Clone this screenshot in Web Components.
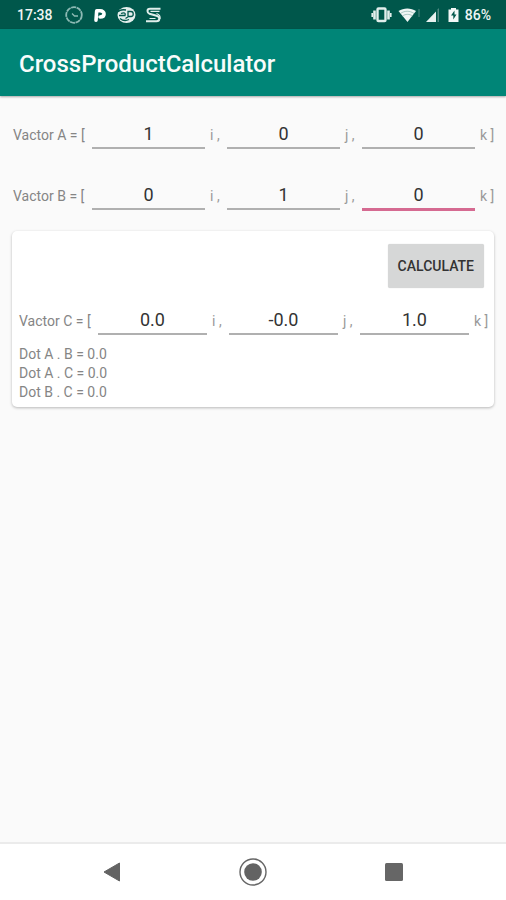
<!DOCTYPE html>
<html lang="en">
<head>
<meta charset="utf-8">
<meta name="viewport" content="width=device-width, initial-scale=1">
<title>CrossProductCalculator</title>
<style>
html, body { margin: 0; }
body { font-family: Roboto, "Noto Sans", sans-serif; background: #fafafa; color: #858585; }
</style>
</head>
<body>
<calculator-app></calculator-app>
<script>
function define(name, html, setup) {
  const template = document.createElement('template');
  template.innerHTML = html;
  customElements.define(name, class extends HTMLElement {
    constructor() {
      super();
      this.attachShadow({ mode: 'open' }).append(template.content.cloneNode(true));
    }
    connectedCallback() { if (setup) setup(this, this.shadowRoot); }
  });
}

define('status-bar', `
<style>
:host { display: flex; justify-content: space-between; align-items: center; height: 29px; padding: 0 15px 0 17px; background: #00574b; color: #eef5f4; font-size: 14px; font-weight: 500; line-height: 16px; }
div { display: flex; align-items: center; }
.left { gap: 8px; }
.right { gap: 4px; }
.time { margin-right: 3px; }
svg { display: block; flex: none; }
</style>
<div class="left">
  <span class="time">17:38</span>
  <svg width="20" height="20" viewBox="0 0 20 20" fill="none" stroke="#8dbab4"><circle cx="10" cy="10" r="7.800" stroke-width="1.800" stroke-dasharray="5 .6"/><path d="M8 8.500 10.500 11H14" stroke-width="1.300"/></svg>
  <svg width="16" height="20" viewBox="0 0 16 20"><path fill="none" stroke="#fff" stroke-width="3.600" stroke-linecap="round" stroke-linejoin="round" d="M4 15.200 4.700 5.800H8C13.500 5.800 13.300 12 8 12"/></svg>
  <svg width="20" height="20" viewBox="0 0 20 20"><ellipse cx="10.500" cy="10" rx="9" ry="8" fill="#e4efed"/><g fill="none" stroke="#00574b" stroke-width="1.300"><path d="M2 7C4 4 7 4.500 10 5M5 8.500C8 7 10 8 9 10.500H3M12 6.500h3c3 0 3 5 0 5h-3ZM9.500 13.500l3-2M4 13.500c3 2.500 6 2.500 9 1"/></g></svg>
  <svg width="20" height="20" viewBox="0 0 20 20" fill="none" stroke="#e0eeeb"><path d="M16.500 3.800H6C2.500 3.800 3 8 5.500 8.800l7 1.900c4 1.200 3.500 5.500 0 5.500H2" stroke-width="2"/><path d="M6.500 6.300h9M5.500 13.500h6M12.500 8.500c3 1 4 3 3.500 5.500" stroke-width="1.200"/></svg>
</div>
<div class="right">
  <svg width="22" height="20" viewBox="0 0 22 20" fill="none" stroke="#e2eeec"><rect x="6.500" y="3.500" width="8" height="12.500" rx="1" stroke-width="2.400"/><path d="M3.500 5.500v9M17.500 5.500v9" stroke-width="2.600"/><path d="M1.200 8v4M19.800 8v4" stroke-width="1.600"/></svg>
  <svg width="24" height="20" viewBox="0 0 24 20"><path fill="#f0f6f5" d="M1.500 6C6.500 2.500 14 2.500 19 6L10.500 17Z"/><g fill="none" stroke="#79a7a0" stroke-width=".6"><path d="M3.500 8.500C7.500 5.500 13 5.500 17 8.500M5.500 11c3-2.200 7-2.200 10 0"/></g><path d="M22 4v8" stroke="#4e8981"/></svg>
  <svg width="16" height="20" viewBox="0 0 16 20"><path fill="#e7f1ef" d="M1 17 11 6.500V17Z"/><path fill="#4e8981" d="M12.500 4.500 14 3v14h-1.500Z"/></svg>
  <svg width="16" height="20" viewBox="0 0 16 20"><path fill="#f3f8f7" d="M6 3h5v1.500h2.500V17h-10V4.500H6Z"/><path fill="#00574b" d="M9.500 5.500 6 10.500h2.300V14.500L11.500 9.500H9.500Z"/></svg>
  <span>86%</span>
</div>`);

define('app-bar', `
<style>
:host { display: flex; align-items: center; height: 67px; padding: 0 19px; background: #008577; color: #f8fcfb; box-shadow: 0 1px 2px #0005; position: relative; }
h1 { margin: 0; padding-top: 2px; font-size: 24px; font-weight: 500; line-height: 28px; }
</style>
<h1><slot></slot></h1>`);

define('vector-row', `
<style>
:host { display: grid; grid-template-columns: 80px 1fr 22px 1fr 22px 1fr 19px; align-items: center; font-size: 14px; line-height: 20px; white-space: nowrap; }
span { padding-top: 2px; }
.name { padding-left: 1px; }
.unit { padding-left: 5px; color: #999; }
input { box-sizing: border-box; width: 100%; min-width: 0; height: 30px; margin: 0; padding: 1px 0 0; border: 0; border-bottom: 2px solid #b0b0b0; border-radius: 0; outline: 0; background: none; color: #333; font: 18px/27px Roboto, sans-serif; text-align: center; }
input.active { border-bottom-color: #d56a91; border-bottom-width: 3px; height: 31px; margin-bottom: -1px; }
</style>
<span class="name"></span>
<input><span class="unit">i ,</span>
<input><span class="unit">j ,</span>
<input><span class="unit">k ]</span>`, (host, root) => {
  const name = 'Vactor ' + host.getAttribute('name');
  root.querySelector('.name').textContent = name + ' = [';
  const values = host.getAttribute('values').split(' ');
  root.querySelectorAll('input').forEach((input, i) => {
    input.value = values[i];
    input.inputMode = 'decimal';
    input.setAttribute('aria-label', name + ' ' + 'ijk'[i]);
    input.readOnly = host.hasAttribute('readonly');
    input.classList.toggle('active', host.getAttribute('active') === String(i));
  });
});

define('result-card', `
<style>
:host { display: flex; flex-direction: column; padding: 13px 6px 5px; border-radius: 5px; background: #fff; box-shadow: 0 1px 3px #0004; }
button { align-self: flex-end; margin: 0 4px 17px 0; height: 44px; padding: 0 10px; border: 0; border-radius: 2px; background: #d6d7d7; color: #333; font: 500 14px/20px Roboto, sans-serif; box-shadow: 0 0 1px #0003; }
.dots { padding: 10px 1px 0; font-size: 14px; line-height: 19px; }
</style>
<button type="button">CALCULATE</button>
<slot></slot>
<div class="dots"><slot name="dots"></slot></div>`);

define('nav-bar', `
<style>
:host { display: flex; justify-content: center; align-items: center; gap: 100px; height: 56px; border-top: 2px solid #ebebeb; background: #fff; }
button { display: grid; place-items: center; width: 41px; height: 40px; padding: 0; border: 0; background: none; }
svg { display: block; }
</style>
<button type="button" aria-label="Back"><svg width="30" height="30" viewBox="0 0 30 30"><path d="M7 15 22.500 6v18Z" fill="#636363" stroke="#636363" stroke-linejoin="round"/></svg></button>
<button type="button" aria-label="Home"><svg width="30" height="30" viewBox="0 0 30 30"><circle cx="15" cy="15" r="13" fill="none" stroke="#666" stroke-width="1.400"/><circle cx="15" cy="15" r="8.800" fill="#636363"/></svg></button>
<button type="button" aria-label="Recent apps"><svg width="30" height="30" viewBox="0 0 30 30"><rect x="6" y="6" width="18" height="18" rx="1.500" fill="#666"/></svg></button>`);

define('calculator-app', `
<style>
:host { display: flex; flex-direction: column; min-height: 100vh; }
main { flex: 1; padding: 23px 12px; }
.inputs { display: grid; gap: 31px; margin-bottom: 21px; }
p { margin: 0; }
</style>
<status-bar></status-bar>
<app-bar>CrossProductCalculator</app-bar>
<main>
  <div class="inputs">
    <vector-row name="A" values="1 0 0"></vector-row>
    <vector-row name="B" values="0 1 0" active="2"></vector-row>
  </div>
  <result-card>
    <vector-row name="C" values="0.0 -0.0 1.0" readonly></vector-row>
    <p slot="dots">Dot A . B = 0.0</p>
    <p slot="dots">Dot A . C = 0.0</p>
    <p slot="dots">Dot B . C = 0.0</p>
  </result-card>
</main>
<nav-bar></nav-bar>`);
</script>
</body>
</html>
